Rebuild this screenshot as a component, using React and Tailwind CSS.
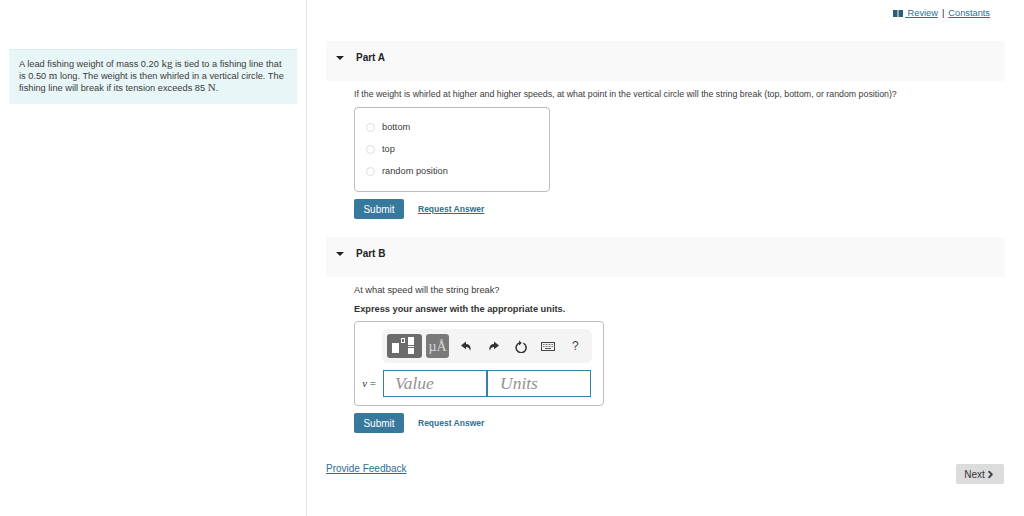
import { ChevronRight } from 'lucide-react'

const font = { fontFamily: '"Liberation Sans", Arial, sans-serif' }
const serif = { fontFamily: '"Liberation Serif", serif' }

function PartHeader({ label }) {
  return (
    <div className="h-10 bg-[#f9f9f9] flex items-center pl-[10px]">
      <span className="w-0 h-0 border-x-[4px] border-x-transparent border-t-[4px] border-t-[#222] mr-[12px] -mt-[7px]"></span>
      <span className="text-[10px] font-bold text-[#222] -mt-[8px]">{label}</span>
    </div>
  )
}

function Radio({ label }) {
  return (
    <div className="h-[22px] flex items-center">
      <span className="w-[9px] h-[9px] rounded-full border border-[#dedede] bg-white ml-[11px] mr-[7px] -mt-[2px]"></span>
      <span className="text-[9.25px] text-[#3a3a3a]">{label}</span>
    </div>
  )
}

function SubmitRow({ underline }) {
  return (
    <div className="flex items-center h-5">
      <button className="w-[50px] h-5 rounded-[2px] bg-[#37799c] text-white text-[10px]">Submit</button>
      <a className={`ml-[14px] text-[8.5px] font-bold text-[#2d6f93] ${underline ? 'underline' : ''}`}>Request Answer</a>
    </div>
  )
}

function Toolbar() {
  return (
    <div className="ml-[27px] w-[210px] h-[34px] rounded-[6px] bg-[#f4f4f4] flex items-center pl-[5px]">
      <div className="w-[35px] h-[24px] rounded-[3px] bg-[#6b6b6b] relative">
        <span className="absolute left-[5px] top-[9px] w-[7px] h-[10px] bg-white"></span>
        <span className="absolute left-[14px] top-[4px] w-[4px] h-[5px] border border-white"></span>
        <span className="absolute left-[21px] top-[3px] w-[6px] h-[8px] bg-white"></span>
        <span className="absolute left-[21px] top-[12px] w-[6px] h-px bg-white"></span>
        <span className="absolute left-[21px] top-[14px] w-[6px] h-[6px] bg-white"></span>
      </div>
      <div className="ml-[4px] w-[23px] h-[24px] rounded-[3px] bg-[#7a7a7a] flex items-end justify-center pb-[4px] text-[#d8d8d8] text-[14px] leading-none font-light" style={serif}>
        µÅ
      </div>
      <svg className="ml-[12px]" width="10" height="11" viewBox="0 0 10 11"><path d="M5 0.5 0 4.4l5 3.8V5.9c2 0 3.3.9 4.2 3.9C10.400 5.800 8.500 3.200 5 3.100z" fill="#333" /></svg>
      <svg className="ml-[18px]" width="10" height="11" viewBox="0 0 10 11"><path d="M5 0.500l5 3.900-5 3.800V5.900c-2 0-3.300.9-4.200 3.900C-.4 5.800 1.500 3.200 5 3.100z" fill="#333" /></svg>
      <svg className="ml-[16px]" width="12" height="13" viewBox="0 0 12 13" fill="none"><path d="M8.400 3.200A5 5 0 1 1 4.600 2.900" stroke="#333" strokeWidth="1.500" /><path d="M4 0.400v5l2.800-2.500z" fill="#333" /></svg>
      <svg className="ml-[14px]" width="14" height="9" viewBox="0 0 14 9"><rect x="0.500" y="0.500" width="13" height="8" fill="none" stroke="#444" /><path d="M2 2.500h10M2 4.500h10" stroke="#777" strokeDasharray="1 .5" /><path d="M4 6.500h6" stroke="#555" /></svg>
      <span className="ml-[17px] text-[12px] text-[#444]">?</span>
    </div>
  )
}

export default function App() {
  return (
    <div className="w-[1024px] h-[516px] bg-white flex overflow-hidden" style={font}>
      <aside className="w-[307px] h-full border-r border-[#deeaf2] pl-[9px] pt-[49px] shrink-0">
        <div className="w-[288px] h-[55px] bg-[#e9f6f7] border-t border-[#dcecec] pl-[10px] pt-[8px] text-[9.25px] leading-[12px] text-[#3a3a3a]">
          A lead fishing weight of mass 0.20 <span className="text-[11px] leading-[0]" style={serif}>kg</span> is tied to a fishing line that
          <br />
          is 0.50 <span className="text-[11px] leading-[0]" style={serif}>m</span> long. The weight is then whirled in a vertical circle. The
          <br />
          fishing line will break if its tension exceeds 85 <span className="text-[11px] leading-[0]" style={serif}>N</span>.
        </div>
      </aside>

      <main className="flex-1 pl-[19px] pr-[19px]">
        <div className="h-[41px] flex justify-end items-start pt-[7px] pr-[15px] text-[9.25px] text-[#2d6f93]">
          <span className="flex items-center">
            <svg width="10" height="7" viewBox="0 0 10 7" className="mr-[2px]"><rect width="4.500" height="7" fill="#2b5d7a" /><rect x="5.500" width="4.500" height="7" fill="#2b5d7a" /></svg>
            <a className="underline">&nbsp;Review</a>
            <span className="mx-[4px] text-[#222]">|</span>
            <a className="underline">Constants</a>
          </span>
        </div>

        <PartHeader label="Part A" />
        <div className="pl-[28px]">
          <p className="mt-[7px] text-[8.8px] leading-[12px] text-[#3a3a3a]">If the weight is whirled at higher and higher speeds, at what point in the vertical circle will the string break (top, bottom, or random position)?</p>
          <div className="mt-[7px] w-[196px] h-[85px] rounded-[4px] border border-[#bdbdbd] pt-[9px]">
            <Radio label="bottom" />
            <Radio label="top" />
            <Radio label="random position" />
          </div>
          <div className="mt-[7px]">
            <SubmitRow underline />
          </div>
        </div>

        <div className="mt-[18px]">
          <PartHeader label="Part B" />
        </div>
        <div className="pl-[28px]">
          <p className="mt-[7px] text-[9.25px] leading-[12px] text-[#3a3a3a]">At what speed will the string break?</p>
          <p className="mt-[7px] text-[9.25px] leading-[12px] font-bold text-[#333]">Express your answer with the appropriate units.</p>
          <div className="mt-[6px] w-[250px] h-[85px] rounded-[4px] border border-[#bdbdbd] pt-[7px]">
            <Toolbar />
            <div className="mt-[7px] flex items-center">
              <span className="w-[21px] text-right text-[11px] text-[#333] mr-[7px]" style={serif}><i>v</i> =</span>
              <div className="w-[104px] h-[27px] border border-[#3a7f9f] pl-[11px] flex items-center text-[#939393] text-[17.5px] italic" style={serif}>Value</div>
              <div className="w-[104px] h-[27px] border border-[#3a7f9f] pl-[12px] flex items-center text-[#939393] text-[17.5px] italic" style={serif}>Units</div>
            </div>
          </div>
          <div className="mt-[7px]">
            <SubmitRow />
          </div>
        </div>

        <div className="mt-[31px] flex items-center justify-between">
          <a className="text-[10px] text-[#2d6f93] underline -mt-[12px]">Provide Feedback</a>
          <button className="mr-px w-[48px] h-5 rounded-[2px] bg-[#dcdcdc] text-[10px] text-[#333] flex items-center justify-center">
            Next
            <ChevronRight size={11} strokeWidth={4} color="#444" />
          </button>
        </div>
      </main>
    </div>
  )
}
